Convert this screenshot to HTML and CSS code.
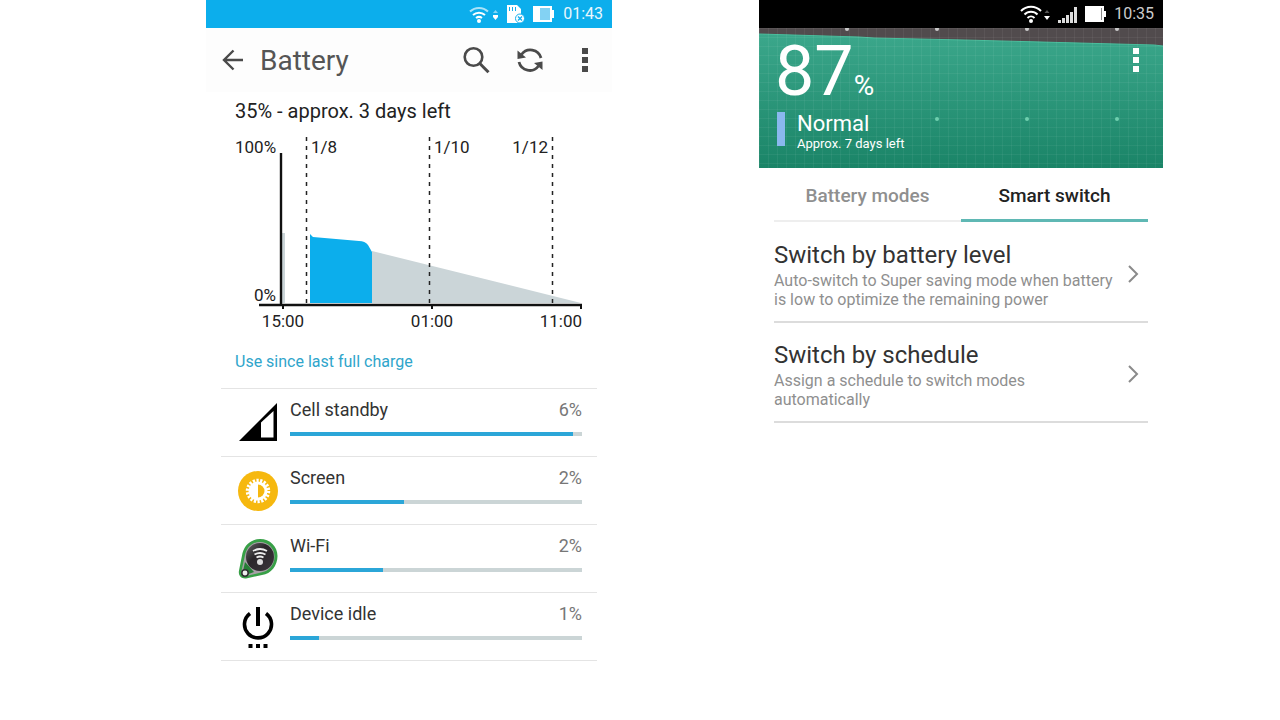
FILE: index.html
```html
<!DOCTYPE html>
<html lang="en">
<head>
    <meta charset="UTF-8">
    <meta name="viewport" content="width=device-width, initial-scale=1.0">
    <title>Battery</title>
    <link rel="stylesheet" href="styles.css">
</head>
<body>
    <main class="screens">
        <section class="phone phone-left">
            <div class="status status-blue">
                <svg width="30" height="20" viewBox="0 0 30 20" fill="none" stroke="#fff" stroke-width="2">
                    <path d="M1 7.500a13 13 0 0 1 18 0" opacity=".65"/>
                    <path d="M4 11a9 9 0 0 1 12 0"/>
                    <path d="M7 14a5 5 0 0 1 6 0"/>
                    <circle cx="10" cy="17" r="2" fill="#fff" stroke="none"/>
                    <path d="M24 9l2.500-3 2.500 3z" fill="#fff" stroke="none" opacity=".5"/>
                    <path d="M24 11h5v2l-2.500 3-2.500-3z" fill="#fff" stroke="none"/>
                </svg>
                <svg width="18" height="20" viewBox="0 0 18 20">
                    <path d="M0 1h10l4 4v14H0z" fill="#fff"/>
                    <path d="M2.500 3v4M5.500 3v4M8.500 3v4" stroke="#12aeee" stroke-width="1"/>
                    <circle cx="13" cy="14.500" r="4.500" fill="#fff" stroke="#12aeee"/>
                    <path d="M11 12.500l4 4M15 12.500l-4 4" stroke="#12aeee" stroke-width="1.300"/>
                </svg>
                <svg width="22" height="20" viewBox="0 0 22 20">
                    <path d="M0 2h19v4h2v8h-2v4H0z" fill="#fff"/>
                    <path d="M7 4h10v12H7z" fill="#83d2f3"/>
                </svg>
                <span>01:43</span>
            </div>

            <header class="appbar">
                <button type="button" aria-label="Back">
                    <svg width="22" height="22" viewBox="0 0 22 22" fill="none" stroke="#4a4a4a" stroke-width="2.400">
                        <path d="M21 11H2M11.500 1.500L2 11l9.500 9.500"/>
                    </svg>
                </button>
                <h1>Battery</h1>
                <div class="actions">
                    <button type="button" aria-label="Search">
                        <svg width="28" height="28" viewBox="0 0 28 28" fill="none" stroke="#4a4a4a" stroke-width="2.600">
                            <circle cx="11.500" cy="11" r="8.800"/>
                            <path d="M17.800 17.500l8.700 8.700" stroke-width="3"/>
                        </svg>
                    </button>
                    <button type="button" aria-label="Refresh">
                        <svg width="28" height="28" viewBox="0 0 28 28" fill="none" stroke="#4a4a4a" stroke-width="2.800">
                            <path d="M5.500 8.500A11 11 0 0 1 25 12"/>
                            <path d="M3 16A11 11 0 0 0 22.500 20"/>
                            <path d="M1.500 4.500v8.500l8.500-1.500z" fill="#4a4a4a" stroke="none"/>
                            <path d="M26.500 24v-8.500l-8.500 1.500z" fill="#4a4a4a" stroke="none"/>
                        </svg>
                    </button>
                    <button type="button" aria-label="More options">
                        <svg width="6" height="24" viewBox="0 0 6 24" fill="#4a4a4a">
                            <path d="M0 0h6v6H0zM0 9h6v6H0zM0 18h6v6H0z"/>
                        </svg>
                    </button>
                </div>
            </header>

            <p class="summary">35% - approx. 3 days left</p>

            <svg class="chart" viewBox="0 0 406 210" role="img" aria-label="Battery level over time">
                <path d="M76 103h3v70h-3z" fill="#cbd5d8"/>
                <path d="M166 121L375 173H166z" fill="#cbd5d8"/>
                <path d="M104 173V104l3 3 46 4q6 0 9 4l4 7v51z" fill="#0caeec"/>
                <g stroke="#222" stroke-width="1.500" stroke-dasharray="4 5">
                    <path d="M100.500 7v167M223.500 7v167M346.500 7v167"/>
                </g>
                <path d="M75 23v152" stroke="#111" stroke-width="2.400"/>
                <path d="M53 175h323" stroke="#111" stroke-width="2.400"/>
                <path d="M77 175v4M226 175v4M375 175v4" stroke="#111" stroke-width="2"/>
                <g class="chart-text">
                    <text x="29" y="23">100%</text>
                    <text x="105" y="23">1/8</text>
                    <text x="228" y="23">1/10</text>
                    <text x="342" y="23" text-anchor="end">1/12</text>
                    <text x="70" y="171" text-anchor="end">0%</text>
                    <text x="77" y="197" text-anchor="middle">15:00</text>
                    <text x="226" y="197" text-anchor="middle">01:00</text>
                    <text x="376" y="197" text-anchor="end">11:00</text>
                </g>
            </svg>

            <h2 class="since">Use since last full charge</h2>

            <ul class="usage">
                <li>
                    <svg width="40" height="40" viewBox="0 0 40 40">
                        <path d="M1 38L39 0v38z"/>
                        <path d="M23 19.500L35.500 8v26.500H23z" fill="#fff"/>
                    </svg>
                    <div class="item">
                        <span>Cell standby</span><span class="percent">6%</span>
                        <div class="bar"><div class="fill" style="width: 97%"></div></div>
                    </div>
                </li>
                <li>
                    <svg width="40" height="40" viewBox="0 0 40 40">
                        <circle cx="20" cy="20" r="20" fill="#f6b80f"/>
                        <circle cx="20" cy="20" r="10.500" fill="none" stroke="#fff" stroke-width="3.500" stroke-dasharray="2.200 1.465"/>
                        <circle cx="20" cy="20" r="9.500" fill="#fff"/>
                        <path d="M20 13.500a6.500 6.500 0 0 1 0 13z" fill="#f6b80f"/>
                    </svg>
                    <div class="item">
                        <span>Screen</span><span class="percent">2%</span>
                        <div class="bar"><div class="fill" style="width: 39%"></div></div>
                    </div>
                </li>
                <li>
                    <svg width="40" height="40" viewBox="0 0 40 40">
                        <defs>
                            <linearGradient id="tag" x1="0" y1="0" x2="1" y2="1">
                                <stop offset="0" stop-color="#666"/>
                                <stop offset=".4" stop-color="#2b272b"/>
                                <stop offset="1" stop-color="#3b353b"/>
                            </linearGradient>
                        </defs>
                        <path d="M4.500 14C7 5 14 0 22 0c10 0 17.500 7.500 17.500 17S33 35 24 36L8 39.500c-5 .5-8-3-7-8z" fill="#38a047"/>
                        <path d="M7 16C9 7 15 3 22 3c8.500 0 14.500 6.500 14.500 14.500S31 32.500 23 33.500L8 37c-3 .5-5-2-4.500-5z" fill="#a6a0a6"/>
                        <path d="M5 32l2-9 9 10-8 3z" fill="#257e35"/>
                        <circle cx="22" cy="18" r="14" fill="url(#tag)"/>
                        <circle cx="7" cy="34" r="3.200" fill="#eee" stroke="#303030" stroke-width="1.500"/>
                        <g fill="none" stroke="#eee" stroke-width="1.800">
                            <path d="M15 12q7-4 14 0"/>
                            <path d="M16.500 15.500q5.500-3 11 0"/>
                            <path d="M18.500 18.500q3.500-2 7 0"/>
                        </g>
                        <circle cx="22" cy="23" r="3" fill="#ddd"/>
                    </svg>
                    <div class="item">
                        <span>Wi-Fi</span><span class="percent">2%</span>
                        <div class="bar"><div class="fill" style="width: 32%"></div></div>
                    </div>
                </li>
                <li>
                    <svg width="40" height="44" viewBox="0 0 40 44">
                        <path d="M12 8.500a13.500 13.500 0 1 0 16 0" fill="none" stroke="#000" stroke-width="3.600"/>
                        <path d="M20 2v19" stroke="#000" stroke-width="4"/>
                        <path d="M10.500 39h4v4h-4zM18 39h4v4h-4zM25.500 39h4v4h-4z"/>
                    </svg>
                    <div class="item">
                        <span>Device idle</span><span class="percent">1%</span>
                        <div class="bar"><div class="fill" style="width: 10%"></div></div>
                    </div>
                </li>
            </ul>
        </section>

        <section class="phone phone-right">
            <div class="status status-black">
                <svg width="31" height="20" viewBox="0 0 31 20" fill="none" stroke="#fff" stroke-width="2">
                    <path d="M1 7a14 14 0 0 1 20 0"/>
                    <path d="M4.500 10.500a9 9 0 0 1 13 0"/>
                    <path d="M7.500 14a5 5 0 0 1 7 0"/>
                    <circle cx="11" cy="17" r="2" fill="#fff" stroke="none"/>
                    <path d="M24.500 9l2.500-3 2.500 3z" fill="#555" stroke="none"/>
                    <path d="M24 12h6l-3 4z" fill="#fff" stroke="none"/>
                </svg>
                <svg width="20" height="20" viewBox="0 0 20 20" fill="#ddd">
                    <path d="M0 16h3v3H0zM4 14h3v5H4zM8 11h3v8H8zM12 8h3v11h-3zM16 3h3v16h-3z"/>
                </svg>
                <svg width="22" height="20" viewBox="0 0 22 20">
                    <path d="M0 2h19v5h2v6h-2v5H0z" fill="#fff"/>
                    <path d="M16.500 4v12" stroke="#888"/>
                </svg>
                <span>10:35</span>
            </div>

            <header class="hero">
                <svg class="hero-graph" viewBox="0 0 404 140" preserveAspectRatio="none" aria-hidden="true">
                    <defs>
                        <linearGradient id="green" x1="0" y1="0" x2="0" y2="1">
                            <stop offset="0" stop-color="#3ba78b"/>
                            <stop offset="1" stop-color="#1a8467"/>
                        </linearGradient>
                        <pattern id="grid" width="9" height="9" patternUnits="userSpaceOnUse">
                            <path d="M0 .5h9M.5 0v9" stroke="#fff" stroke-opacity=".05"/>
                        </pattern>
                    </defs>
                    <path d="M0 0h404v140H0z" fill="#514b4d"/>
                    <path d="M0 6l100 3 15 1 90 2 190 5 9 1v122H0z" fill="url(#green)"/>
                    <path d="M0 6l100 3 15 1 90 2 190 5 9 1" fill="none" stroke="#4abd9c"/>
                    <path d="M0 0h404v140H0z" fill="url(#grid)"/>
                    <g fill="#ccc">
                        <circle cx="88" cy="1" r="2"/>
                        <circle cx="178" cy="1" r="2"/>
                        <circle cx="268" cy="1" r="2"/>
                        <circle cx="358" cy="1" r="2"/>
                    </g>
                    <g fill="#6fcfae">
                        <circle cx="178" cy="91" r="2"/>
                        <circle cx="268" cy="91" r="2"/>
                        <circle cx="358" cy="91" r="2"/>
                    </g>
                </svg>
                <div class="hero-content">
                    <div>
                        <p class="level">87<span>%</span></p>
                        <div class="mode">
                            <p class="mode-name">Normal</p>
                            <p class="mode-left">Approx. 7 days left</p>
                        </div>
                    </div>
                    <button type="button" aria-label="More options">
                        <svg width="6" height="24" viewBox="0 0 6 24" fill="#fff">
                            <path d="M0 0h6v6H0zM0 9h6v6H0zM0 18h6v6H0z"/>
                        </svg>
                    </button>
                </div>
            </header>

            <nav class="tabs">
                <button type="button">Battery modes</button>
                <button type="button" class="active">Smart switch</button>
            </nav>

            <div class="options">
                <a href="#level">
                    <div>
                        <h2>Switch by battery level</h2>
                        <p>Auto-switch to Super saving mode when battery is low to optimize the remaining power</p>
                    </div>
                    <svg width="12" height="20" viewBox="0 0 12 20" fill="none" stroke="#8a8a8a" stroke-width="2">
                        <path d="M2 2l8 8-8 8"/>
                    </svg>
                </a>
                <a href="#schedule">
                    <div>
                        <h2>Switch by schedule</h2>
                        <p>Assign a schedule to switch modes automatically</p>
                    </div>
                    <svg width="12" height="20" viewBox="0 0 12 20" fill="none" stroke="#8a8a8a" stroke-width="2">
                        <path d="M2 2l8 8-8 8"/>
                    </svg>
                </a>
            </div>
        </section>
    </main>
</body>
</html>
```
FILE: styles.css
```css
* {
    box-sizing: border-box;
}

body {
    font-family: Roboto, Arial, sans-serif;
    background-color: #fff;
    color: #333;
    margin: 0;
}

h1, h2, p, ul {
    margin: 0;
    padding: 0;
    font-weight: 400;
}

button {
    display: flex;
    padding: 0;
    border: none;
    background: none;
    font-family: inherit;
    cursor: pointer;
}

svg {
    display: block;
    flex-shrink: 0;
}

/* two phones side by side with free space around them */
.screens {
    display: grid;
    grid-template-columns: 206fr 406fr 147fr 404fr 117fr;
    align-items: start;
}

.phone-left {
    grid-column: 2;
}

.phone-right {
    grid-column: 4;
}

/* status bar */
.status {
    display: flex;
    align-items: center;
    justify-content: flex-end;
    gap: 8px;
    height: 28px;
    padding-right: 9px;
    font-size: 16px;
}

.status-blue {
    background-color: #0caeec;
    color: #e8f7fd;
}

.status-black {
    background-color: #000;
    color: #ccc;
    gap: 7px;
}

.status span {
    line-height: 28px;
}

/* battery screen */
.appbar {
    display: flex;
    align-items: center;
    gap: 16px;
    height: 64px;
    padding: 0 24px 0 16px;
    background-color: #fdfdfd;
}

.appbar h1 {
    font-size: 28px;
    color: #555;
}

.actions {
    display: flex;
    align-items: center;
    gap: 26px;
    margin-left: auto;
}

.actions button:last-child {
    margin-left: 12px;
}

.summary {
    padding: 4px 29px 0;
    font-size: 20px;
    line-height: 30px;
    color: #222;
}

.chart {
    width: 100%;
    margin-top: 4px;
}

.chart-text {
    font-size: 17px;
    fill: #222;
}

.since {
    padding: 6px 29px 10px;
    font-size: 16px;
    line-height: 32px;
    color: #2fa5cb;
}

.usage {
    list-style: none;
    margin: 0 15px;
    border-top: 1px solid #e4e4e4;
}

.usage li {
    display: flex;
    align-items: center;
    gap: 12px;
    height: 68px;
    padding: 0 15px 0 17px;
    border-bottom: 1px solid #e4e4e4;
}

.item {
    flex: 1;
    display: flex;
    flex-wrap: wrap;
    justify-content: space-between;
    padding-bottom: 12px;
    font-size: 18px;
    line-height: 24px;
}

.percent {
    color: #777;
}

.bar {
    width: 100%;
    height: 4px;
    margin-top: 10px;
    background-color: #cbd5d6;
}

.fill {
    height: 100%;
    background-color: #2ba6d8;
}

/* power saver screen */
.hero {
    display: grid;
    height: 140px;
    color: #fff;
}

.hero-graph, .hero-content {
    grid-area: 1 / 1;
    width: 100%;
    height: 140px;
}

.hero-content {
    display: flex;
    align-items: flex-start;
    justify-content: space-between;
    padding: 8px 24px 0 16px;
    z-index: 1;
}

.hero-content button {
    margin-top: 12px;
}

.level {
    height: 76px;
    font-size: 70px;
    line-height: 70px;
}

.level span {
    font-size: 28px;
}

.mode {
    margin-left: 2px;
    padding-left: 12px;
    border-left: 8px solid #8ab8ee;
    height: 34px;
}

.mode-name {
    font-size: 22px;
    line-height: 24px;
}

.mode-left {
    font-size: 13px;
    line-height: 16px;
}

.tabs {
    display: flex;
    margin: 0 15px;
}

.tabs button {
    flex: 1;
    justify-content: center;
    height: 54px;
    padding-top: 16px;
    border-bottom: 2px solid #eee;
    font-size: 19px;
    font-weight: 500;
    line-height: 24px;
    color: #8f8f8f;
}

.tabs .active {
    border-bottom: 3px solid #5fb8b4;
    color: #222;
}

.options {
    margin: 1px 15px 0;
}

.options a {
    display: flex;
    align-items: center;
    justify-content: space-between;
    gap: 8px;
    height: 100px;
    padding: 3px 9px 0 0;
    border-bottom: 2px solid #dcdcdc;
    color: #8f8f8f;
    text-decoration: none;
}

.options h2 {
    font-size: 24px;
    line-height: 32px;
    color: #333;
}

.options p {
    font-size: 16px;
    line-height: 19px;
}
```
